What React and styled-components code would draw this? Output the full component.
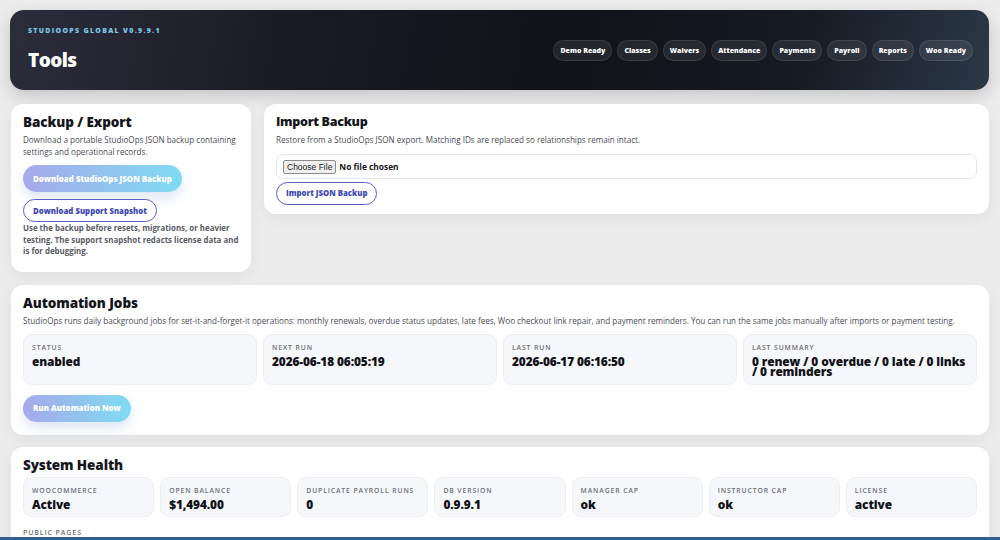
import React from "react";
import styled, { createGlobalStyle } from "styled-components";

const GlobalStyle = createGlobalStyle`
  html, body {
    margin: 0;
    padding: 0;
    background: #ececed;
    font-family: "Open Sans", "Liberation Sans", sans-serif;
    color: #15161c;
    overflow: hidden;
  }
`;

const NAV = [
  "Demo Ready",
  "Classes",
  "Waivers",
  "Attendance",
  "Payments",
  "Payroll",
  "Reports",
  "Woo Ready",
];

const JOBS = [
  { label: "Status", value: "enabled" },
  { label: "Next Run", value: "2026-06-18 06:05:19" },
  { label: "Last Run", value: "2026-06-17 06:16:50" },
  { label: "Last Summary", value: "0 renew / 0 overdue / 0 late / 0 links / 0 reminders" },
];

const HEALTH = [
  { label: "WooCommerce", value: "Active" },
  { label: "Open Balance", value: "$1,494.00" },
  { label: "Duplicate Payroll Runs", value: "0" },
  { label: "DB Version", value: "0.9.9.1" },
  { label: "Manager Cap", value: "ok" },
  { label: "Instructor Cap", value: "ok" },
  { label: "License", value: "active" },
];

const App = () => {
  return (
    <>
      <GlobalStyle />
      <Page>
        <Hero>
          <div>
            <Eyebrow>StudioOps Global v0.9.9.1</Eyebrow>
            <HeroTitle>Tools</HeroTitle>
          </div>
          <Pills>
            {NAV.map((n) => (
              <Pill key={n}>{n}</Pill>
            ))}
          </Pills>
        </Hero>

        <TopRow>
          <Card>
            <Title>Backup / Export</Title>
            <Text>
              Download a portable StudioOps JSON backup containing settings and
              operational records.
            </Text>
            <Actions>
              <GradientButton>Download StudioOps JSON Backup</GradientButton>
              <OutlineButton>Download Support Snapshot</OutlineButton>
            </Actions>
            <Note>
              Use the backup before resets, migrations, or heavier testing. The
              support snapshot redacts license data and is for debugging.
            </Note>
          </Card>

          <Card $bottom={9}>
            <Title $narrow>Import Backup</Title>
            <Text>
              Restore from a StudioOps JSON export. Matching IDs are replaced so
              relationships remain intact.
            </Text>
            <FileBox>
              <FileButton>Choose File</FileButton>
              <FileName>No file chosen</FileName>
            </FileBox>
            <OutlineButton $tall>Import JSON Backup</OutlineButton>
          </Card>
        </TopRow>

        <Card $bottom={13}>
          <Title>Automation Jobs</Title>
          <Text>
            StudioOps runs daily background jobs for set-it-and-forget-it
            operations: monthly renewals, overdue status updates, late fees, Woo
            checkout link repair, and payment reminders. You can run the same
            jobs manually after imports or payment testing.
          </Text>
          <StatGrid $cols={4}>
            {JOBS.map((s) => (
              <Stat key={s.label} $tall>
                <StatLabel>{s.label}</StatLabel>
                <StatValue>{s.value}</StatValue>
              </Stat>
            ))}
          </StatGrid>
          <Actions $gap={10}>
            <GradientButton>Run Automation Now</GradientButton>
          </Actions>
        </Card>

        <Card $pull>
          <Title>System Health</Title>
          <StatGrid $cols={7} $top={4}>
            {HEALTH.map((s) => (
              <Stat key={s.label}>
                <StatLabel>{s.label}</StatLabel>
                <StatValue>{s.value}</StatValue>
              </Stat>
            ))}
          </StatGrid>
          <SubLabel>Public Pages</SubLabel>
        </Card>
      </Page>
      <BottomBar />
    </>
  );
};

export default App;

const Page = styled.div`
  display: flex;
  flex-direction: column;
  gap: 13px;
  padding: 10px 11px 20px 11px;
`;

const Hero = styled.header`
  display: flex;
  align-items: flex-start;
  justify-content: space-between;
  height: 80px;
  box-sizing: border-box;
  margin: 0 0 1px -1px;
  padding: 16px 16px 0 18px;
  border-radius: 14px;
  background: linear-gradient(
    100deg,
    #2c2d3b 0%,
    #1a1b25 28%,
    #11121a 55%,
    #161a23 80%,
    #2b3846 100%
  );
  box-shadow: 0 6px 16px rgba(20, 22, 30, 0.18);
`;

const Eyebrow = styled.div`
  font-size: 7px;
  line-height: 10px;
  font-weight: 800;
  letter-spacing: 1.3px;
  text-transform: uppercase;
  color: #7cc6e6;
`;

const HeroTitle = styled.h1`
  margin: 12px 0 0;
  font-size: 19px;
  line-height: 24px;
  font-weight: 800;
  letter-spacing: -0.6px;
  color: #ffffff;
`;

const Pills = styled.nav`
  display: flex;
  gap: 5px;
  margin-top: 14px;
`;

const Pill = styled.span`
  display: inline-flex;
  align-items: center;
  height: 21px;
  box-sizing: border-box;
  padding: 0 6px;
  border-radius: 11px;
  background: rgba(255, 255, 255, 0.08);
  border: 1px solid rgba(255, 255, 255, 0.1);
  color: #ffffff;
  font-size: 7px;
  font-weight: 800;
  white-space: nowrap;
`;

const TopRow = styled.div`
  display: grid;
  grid-template-columns: 240px 1fr;
  gap: 13px;
  align-items: start;
`;

const Card = styled.section`
  margin-top: ${(p) => (p.$pull ? "-1px" : "0")};
  background: #ffffff;
  border-radius: 12px;
  padding: 10px 12px ${(p) => p.$bottom ?? 14}px;
  box-shadow: 0 4px 14px rgba(30, 30, 40, 0.06);
`;

const Title = styled.h2`
  margin: 0 0 4px;
  font-size: ${(p) => (p.$narrow ? "12.5px" : "13.5px")};
  line-height: 16px;
  font-weight: 800;
  letter-spacing: ${(p) => (p.$narrow ? "-0.3px" : "-0.1px")};
  color: #15161c;
`;

const Text = styled.p`
  margin: 0;
  font-size: 8.1px;
  line-height: 12px;
  color: #4a4c55;
`;

const Actions = styled.div`
  display: flex;
  flex-direction: column;
  align-items: flex-start;
  gap: 7px;
  margin-top: ${(p) => p.$gap ?? 7}px;
`;

const GradientButton = styled.button`
  height: 27px;
  padding: 0 10px;
  border: none;
  border-radius: 14px;
  background: linear-gradient(90deg, #a6a9eb 0%, #8ec7ef 60%, #7fdcf2 100%);
  box-shadow: 0 6px 12px rgba(120, 160, 220, 0.25);
  color: #ffffff;
  font-family: inherit;
  font-size: 7.9px;
  font-weight: 800;
`;

const OutlineButton = styled.button`
  height: 23px;
  margin-top: ${(p) => (p.$tall ? "1px" : "0")};
  padding: 0 9px;
  border: 1px solid #5a5fc7;
  border-radius: 12px;
  background: #ffffff;
  color: #3f4bb8;
  font-family: inherit;
  font-size: 7.8px;
  font-weight: 800;
`;

const Note = styled.p`
  margin: 1px 0 0;
  font-size: 7.9px;
  font-weight: 700;
  line-height: 11.5px;
  color: #5a5c66;
`;

const FileBox = styled.div`
  display: flex;
  align-items: center;
  gap: 3px;
  height: 25px;
  box-sizing: border-box;
  margin-top: 8px;
  padding: 0 6px;
  border: 1px solid #e4e6ea;
  border-radius: 7px;
`;

const FileButton = styled.span`
  padding: 1px 3px;
  border: 1px solid #8c8c8c;
  border-radius: 2px;
  background: #efefef;
  font-family: "Liberation Sans", Arial, sans-serif;
  font-size: 8.5px;
  color: #222;
`;

const FileName = styled.span`
  font-size: 8.4px;
  font-weight: 700;
  color: #15161c;
`;

const StatGrid = styled.div`
  display: grid;
  grid-template-columns: repeat(${(p) => p.$cols}, 1fr);
  gap: 6px;
  margin-top: ${(p) => p.$top ?? 7}px;
`;

const Stat = styled.div`
  height: ${(p) => (p.$tall ? "51px" : "40px")};
  box-sizing: border-box;
  padding: 8px 8px 0;
  border: 1px solid #eceef3;
  border-radius: 9px;
  background: #f6f7fa;
`;

const StatLabel = styled.div`
  font-size: 6.8px;
  line-height: 10px;
  font-weight: 600;
  letter-spacing: 0.9px;
  text-transform: uppercase;
  color: #6d6f78;
`;

const StatValue = styled.div`
  margin-top: 3px;
  font-size: 11.85px;
  font-weight: 800;
  line-height: 10.5px;
  letter-spacing: -0.1px;
  color: #111217;
`;

const SubLabel = styled.div`
  margin-top: 11px;
  font-size: 7px;
  line-height: 10px;
  font-weight: 600;
  letter-spacing: 0.9px;
  text-transform: uppercase;
  color: #6d6f78;
`;

const BottomBar = styled.div`
  position: fixed;
  left: 0;
  right: 0;
  bottom: 0;
  height: 3px;
  background: #2d5f8e;
`;
